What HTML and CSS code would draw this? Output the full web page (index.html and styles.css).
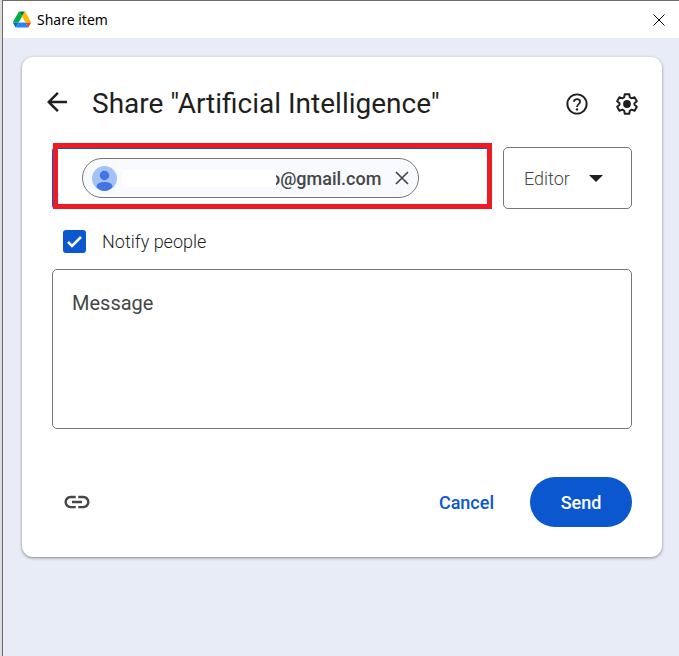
FILE: index.html
```html
<!DOCTYPE html>
<html lang="en">
<head>
<meta charset="UTF-8">
<meta name="viewport" content="width=device-width, initial-scale=1.0">
<title>Share item</title>
<link rel="stylesheet" href="styles.css">
</head>
<body>
    <div class="window">
        <header class="title-bar">
            <svg class="drive-logo" viewBox="0 0 87 78" aria-hidden="true">
                <path fill="#0066da" d="m6.6 66.85 3.85 6.65c.8 1.4 1.95 2.5 3.3 3.3l13.75-23.8h-27.5c0 1.55.4 3.1 1.2 4.5z"/>
                <path fill="#00ac47" d="m43.65 25-13.75-23.8c-1.35.8-2.5 1.9-3.3 3.3l-25.4 44a9.06 9.06 0 0 0 -1.2 4.5h27.5z"/>
                <path fill="#ea4335" d="m73.55 76.8c1.35-.8 2.5-1.9 3.3-3.3l1.6-2.75 7.65-13.25c.8-1.4 1.2-2.95 1.2-4.5h-27.5l5.85 11.5z"/>
                <path fill="#00832d" d="m43.65 25 13.75-23.8c-1.35-.8-2.9-1.2-4.5-1.2h-18.5c-1.6 0-3.15.45-4.5 1.2z"/>
                <path fill="#2684fc" d="m59.8 53h-32.3l-13.75 23.8c1.35.8 2.9 1.2 4.5 1.2h50.8c1.6 0 3.15-.45 4.5-1.2z"/>
                <path fill="#ffba00" d="m73.4 26.5-12.7-22c-.8-1.4-1.95-2.5-3.3-3.3l-13.75 23.8 16.15 28h27.45c0-1.55-.4-3.1-1.2-4.5z"/>
            </svg>
            <span class="window-title">Share item</span>
            <button class="icon-button close-button" aria-label="Close">
                <svg width="12" height="12" viewBox="0 0 12 12"><path d="M.5.5l11 11M11.5.5l-11 11" stroke="#000" stroke-width="1"/></svg>
            </button>
        </header>

        <main class="content">
            <form class="card">
                <div class="card-header">
                    <button type="button" class="icon-button back-button" aria-label="Back">
                        <svg width="30" height="30" viewBox="0 0 24 24" fill="#1f1f1f"><path d="M20 11H7.83l5.59-5.59L12 4l-8 8 8 8 1.41-1.41L7.83 13H20v-2z"/></svg>
                    </button>
                    <h1>Share "Artificial Intelligence"</h1>
                    <button type="button" class="icon-button" aria-label="Help">
                        <svg width="26" height="26" viewBox="0 0 24 24">
                            <circle cx="12" cy="12" r="8.9" fill="none" stroke="#1f1f1f" stroke-width="1.8"/>
                            <path fill="none" stroke="#1f1f1f" stroke-width="1.6" d="M9.1 9.9c.3-1.5 1.400-2.400 2.900-2.400 1.700 0 2.900 1 2.900 2.500 0 2.100-2.900 2.300-2.900 4.700"/>
                            <circle cx="12" cy="17" r="1.1" fill="#1f1f1f"/>
                        </svg>
                    </button>
                    <button type="button" class="icon-button" aria-label="Settings">
                        <svg width="26" height="26" viewBox="0 0 24 24">
                            <path fill="none" stroke="#1f1f1f" stroke-width="1.8" stroke-linejoin="round" d="M9.9 3h4.2l.5 2.8 1.7 1 2.7-1 2.1 3.6-2.2 1.8v1.6l2.2 1.8-2.1 3.6-2.7-1-1.7 1-.5 2.8H9.9l-.5-2.8-1.7-1-2.7 1-2.1-3.6 2.2-1.8v-1.6L2.9 9.4 5 5.8l2.7 1 1.7-1z"/>
                            <circle cx="12" cy="12" r="3.6" fill="#1f1f1f"/>
                        </svg>
                    </button>
                </div>

                <div class="people-row">
                    <div class="people-field">
                        <div class="chip">
                            <svg class="avatar" viewBox="0 0 25 25" aria-hidden="true">
                                <circle cx="12.5" cy="12.5" r="12.5" fill="#a1c2fa"/>
                                <circle cx="12.5" cy="9.5" r="4.7" fill="#4374e0"/>
                                <path fill="#4374e0" d="M4.5 21c0-3.6 3.5-5 8-5s8 1.4 8 5c-2.1 2.6-5 4-8 4s-5.9-1.4-8-4z"/>
                            </svg>
                            <span class="hidden-name"></span>
                            <span class="email">o@gmail.com</span>
                            <button type="button" class="icon-button" aria-label="Remove">
                                <svg width="14" height="14" viewBox="0 0 14 14"><path d="M1 1l12 12M13 1L1 13" stroke="#444746" stroke-width="1.7"/></svg>
                            </button>
                        </div>
                        <input type="text" class="people-input" aria-label="Add people">
                        <span class="highlight"></span>
                    </div>
                    <div class="role">
                        <select class="role-select" aria-label="Role">
                            <option>Editor</option>
                            <option>Commenter</option>
                            <option>Viewer</option>
                        </select>
                        <svg class="role-arrow" width="14" height="7" viewBox="0 0 14 7" aria-hidden="true"><path fill="#1f1f1f" d="M0 0h14L7 7z"/></svg>
                    </div>
                </div>

                <label class="notify">
                    <input type="checkbox" class="notify-box" checked>
                    <span>Notify people</span>
                </label>

                <textarea class="message" placeholder="Message" aria-label="Message"></textarea>

                <div class="actions">
                    <button type="button" class="icon-button link-button" aria-label="Copy link">
                        <svg width="30" height="30" viewBox="0 0 24 24" fill="#444746"><path d="M3.9 12c0-1.71 1.39-3.1 3.1-3.1h4V7H7c-2.76 0-5 2.24-5 5s2.24 5 5 5h4v-1.900H7c-1.71 0-3.1-1.39-3.1-3.1zM8 13h8v-2H8v2zm9-6h-4v1.900h4c1.71 0 3.1 1.39 3.1 3.1s-1.39 3.1-3.1 3.1h-4V17h4c2.76 0 5-2.24 5-5s-2.24-5-5-5z"/></svg>
                    </button>
                    <button type="button" class="cancel-button">Cancel</button>
                    <button type="submit" class="send-button">Send</button>
                </div>
            </form>
        </main>
    </div>
</body>
</html>
```
FILE: styles.css
```css
* {
    box-sizing: border-box;
}

body {
    margin: 0;
    padding-left: 2px;
    background: #dcdcdc;
    color: #1f1f1f;
    font-family: Roboto, "Open Sans", sans-serif;
}

button, input, select, textarea {
    font-family: inherit;
}

.window {
    display: flex;
    flex-direction: column;
    min-height: 100vh;
    border-top: 1px solid #6b6b6b;
    border-left: 1px solid #6b6b6b;
    background: #e8ecf6;
}

/* title bar */
.title-bar {
    display: flex;
    align-items: center;
    gap: 6px;
    height: 37px;
    padding: 0 14px 0 10px;
    background: #fff;
}

.drive-logo {
    width: 18px;
    height: 17px;
}

.window-title {
    flex: 1;
    color: #000;
    font-family: "Noto Sans", "Open Sans", sans-serif;
    font-size: 14px;
}

.icon-button {
    display: flex;
    padding: 0;
    border: none;
    background: none;
    cursor: pointer;
}

/* share card */
.content {
    padding: 19px 17px 19px 19px;
}

.card {
    padding: 30px;
    border-radius: 11px;
    background: #fff;
    box-shadow: 0 1px 3px rgba(60, 64, 67, 0.6);
}

.card-header {
    display: flex;
    align-items: center;
    gap: 24px;
    height: 34px;
}

.back-button {
    margin: 0 -4px 4px -10px;
}

h1 {
    flex: 1;
    margin: 0;
    font-size: 28px;
    font-weight: 400;
    line-height: 34px;
    white-space: nowrap;
}

.card-header .icon-button:last-child {
    margin-right: -8px;
}

.people-row {
    display: flex;
    gap: 12px;
    margin-top: 26px;
}

.people-field {
    position: relative;
    display: flex;
    flex: 1;
    align-items: center;
    min-width: 0;
    height: 62px;
    padding: 0 10px 0 28px;
    border: 2px solid #0b57d0;
    border-radius: 4px;
}

.highlight {
    position: absolute;
    inset: -6px -3px -2px -1px;
    border: 5px solid #ed1c24;
    pointer-events: none;
}

.chip {
    display: flex;
    align-items: center;
    height: 40px;
    padding: 0 9px;
    border: 1px solid #747775;
    border-radius: 20px;
    background: #f8faff;
}

.avatar {
    width: 25px;
    height: 25px;
}

.hidden-name {
    z-index: 1;
    width: 154px;
    height: 17px;
    margin: 0 -6px 0 5px;
    background: #fff;
}

.email {
    margin-right: 14px;
    color: #444746;
    font-size: 18px;
    font-weight: 500;
}

.people-input {
    flex: 1;
    width: 0;
    min-width: 0;
    border: none;
    outline: none;
    background: none;
    font-size: 18px;
}

.role {
    position: relative;
    width: 129px;
}

.role-select {
    width: 100%;
    height: 62px;
    padding: 0 20px;
    border: 1px solid #747775;
    border-radius: 5px;
    background: #fff;
    color: #444746;
    font-size: 18px;
    font-weight: 300;
    appearance: none;
}

.role-arrow {
    position: absolute;
    top: 28px;
    right: 29px;
    pointer-events: none;
}

.notify {
    display: flex;
    align-items: center;
    gap: 16px;
    width: fit-content;
    height: 24px;
    margin: 20px 0 16px 11px;
    font-size: 18px;
    font-weight: 300;
}

.notify-box {
    width: 23px;
    height: 23px;
    margin: 0;
    border-radius: 3px;
    background: #0b57d0 url("data:image/svg+xml,%3Csvg xmlns='http://www.w3.org/2000/svg' viewBox='0 0 23 23'%3E%3Cpath d='M5 12l4 4 9-9' fill='none' stroke='white' stroke-width='2.5'/%3E%3C/svg%3E") center;
    appearance: none;
}

.message {
    display: block;
    width: 100%;
    height: 160px;
    padding: 19px;
    border: 1px solid #747775;
    border-radius: 5px;
    outline: none;
    font-size: 20px;
    line-height: 28px;
    resize: none;
}

.message::placeholder {
    color: #444746;
}

.actions {
    display: flex;
    align-items: center;
    margin-top: 48px;
}

.link-button {
    margin: 0 auto 0 10px;
}

.cancel-button, .send-button {
    height: 50px;
    border: none;
    border-radius: 25px;
    background: none;
    color: #0b57d0;
    font-size: 18px;
    font-weight: 500;
    cursor: pointer;
}

.cancel-button {
    margin-right: 12px;
    padding: 0 24px;
}

.send-button {
    min-width: 102px;
    padding: 0 30px;
    background: #0b57d0;
    color: #fff;
}
```
